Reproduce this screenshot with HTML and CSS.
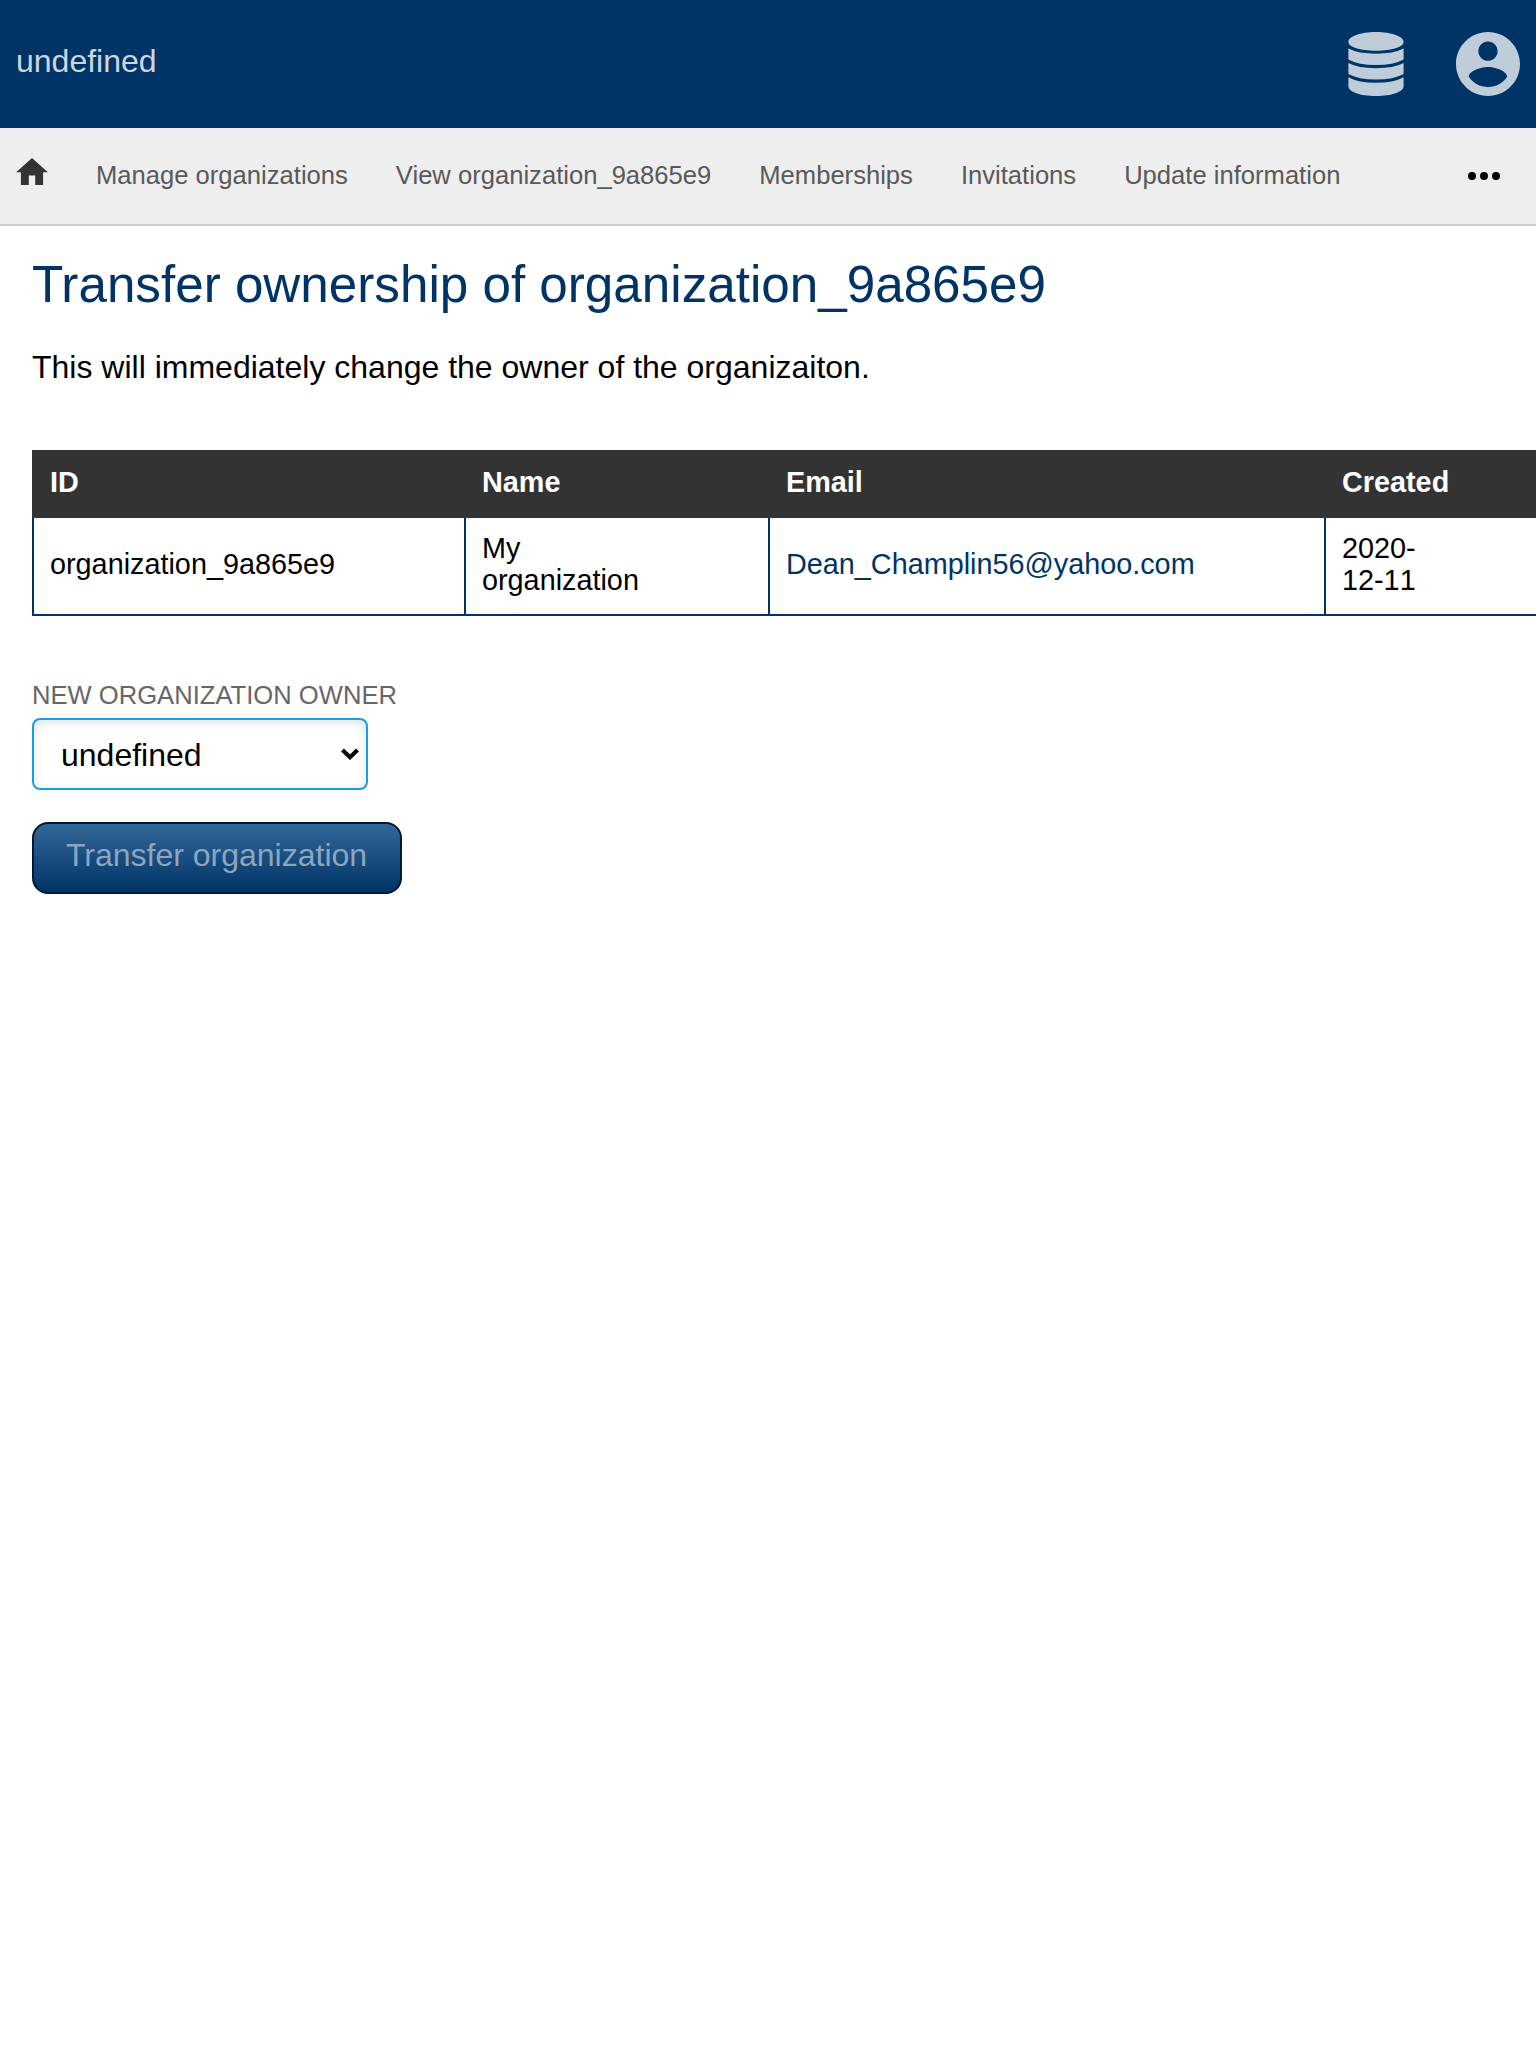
FILE: index.html
```html
<!DOCTYPE html>
<html lang="en">
<head>
<meta charset="utf-8">
<title>Transfer ownership</title>
<link rel="stylesheet" href="styles.css">
</head>
<body>
<header class="header">
  <a class="brand">undefined</a>
  <div class="menus">
    <svg class="icon-database" viewBox="-0.400 0 56.800 64" preserveAspectRatio="none"><path d="M28 0C44 0 56 4.500 56 10C56 15 44 18.700 28 18.700S0 15 0 10C0 4.500 12 0 28 0zM0 16.500Q10 21.700 28 21.700T56 16.500V27.500Q46 33 28 33T0 27.500zM0 31Q10 36.200 28 36.200T56 31V42Q46 47.600 28 47.600T0 42zM0 45.200Q10 50.800 28 50.800T56 45.200V54C56 60 44 64 28 64S0 60 0 54z"/></svg>
    <svg class="icon-account" viewBox="2 2 20 20"><path d="M12 2C6.480 2 2 6.480 2 12s4.480 10 10 10 10-4.480 10-10S17.520 2 12 2zm0 3c1.660 0 3 1.340 3 3s-1.340 3-3 3-3-1.340-3-3 1.340-3 3-3zm0 14.200c-2.500 0-4.710-1.280-6-3.220.03-1.990 4-3.080 6-3.080 1.990 0 5.970 1.090 6 3.080-1.290 1.940-3.500 3.220-6 3.220z"/></svg>
  </div>
</header>
<nav class="nav">
  <svg class="icon-home" viewBox="2 3 20 17"><path d="M10 20v-6h4v6h5v-8h3L12 3 2 12h3v8z"/></svg>
  <a>Manage organizations</a>
  <a>View organization_9a865e9</a>
  <a>Memberships</a>
  <a>Invitations</a>
  <a>Update information</a>
  <svg class="icon-more" viewBox="0 0 32 8"><circle cx="4" cy="4" r="4"/><circle cx="16" cy="4" r="4"/><circle cx="28" cy="4" r="4"/></svg>
</nav>
<main class="content">
  <h1>Transfer ownership of organization_9a865e9</h1>
  <p>This will immediately change the owner of the organizaiton.</p>
  <table class="data">
    <colgroup><col class="col-id"><col class="col-name"><col class="col-email"><col class="col-created"></colgroup>
    <thead><tr><th>ID</th><th>Name</th><th>Email</th><th>Created</th></tr></thead>
    <tbody><tr><td>organization_9a865e9</td><td>My<br>organization</td><td><a>Dean_Champlin56@yahoo.com</a></td><td class="date">2020-<br>12-11</td></tr></tbody>
  </table>
  <form class="form">
    <label for="owner">New organization owner</label>
    <div class="select">
      <select id="owner"><option>undefined</option></select>
      <svg class="chevron" viewBox="0 0 18 12"><path d="M1.500 2L9 9.300L16.500 2"/></svg>
    </div>
    <button type="button">Transfer organization</button>
  </form>
</main>
</body>
</html>
```
FILE: styles.css
```css
* { box-sizing: border-box; }
html { overflow: hidden; }
body {
  margin: 0;
  background: #fff;
  color: #000;
  font: 32px "Liberation Sans", Arial, sans-serif;
}
svg { display: block; flex: none; }
.header {
  display: flex;
  justify-content: space-between;
  align-items: center;
  height: 128px;
  padding: 0 16px;
  background: #036;
}
.brand { color: #ccd6e0; line-height: 36px; padding-bottom: 6px; }
.menus { display: flex; gap: 52px; fill: #bfccd9; }
.icon-database { width: 56px; height: 64px; }
.icon-account { width: 64px; height: 64px; }
.nav {
  display: flex;
  align-items: center;
  gap: 48px;
  height: 98px;
  padding: 0 36px 0 16px;
  background: #eee;
  border-bottom: 2px solid #ccc;
  color: #595959;
  font-size: 25.6px;
  white-space: nowrap;
}
.nav a { padding-bottom: 2px; }
.icon-home { width: 32px; height: 27px; margin-bottom: 9px; fill: #333; }
.icon-more { width: 32px; height: 8px; margin-left: auto; }
.content { padding: 28px 0 28px 32px; overflow: hidden; }
h1 {
  margin: 0;
  color: #036;
  font-size: 51.2px;
  font-weight: 400;
  line-height: 62px;
}
p { margin: 32px 0 64px; line-height: 38px; }
.data {
  width: 1504px;
  table-layout: fixed;
  border-collapse: separate;
  border-spacing: 0;
  border-left: 2px solid #036;
  font-size: 28.8px;
  line-height: 32px;
}
.col-id { width: 432px; }
.col-name { width: 304px; }
.col-email { width: 556px; }
th {
  height: 68px;
  padding: 16px 16px 20px;
  background: #333;
  color: #fff;
  text-align: left;
}
th:first-child { box-shadow: -2px 0 #333; }
td {
  height: 98px;
  padding: 14px 16px 18px;
  border-right: 2px solid #036;
  border-bottom: 2px solid #036;
}
td:last-child { border-right: 0; }
td a { color: #036; }
.date { font-kerning: none; }
.form { display: flex; flex-direction: column; align-items: flex-start; margin-top: 64px; }
label { color: #666; font-size: 25.6px; line-height: 30px; margin-bottom: 8px; text-transform: uppercase; }
.select { display: grid; width: 336px; height: 72px; }
.select > * { grid-area: 1 / 1; }
select {
  appearance: none;
  padding: 2px 27px 0;
  border: 2px solid #14a0e6;
  border-radius: 8px;
  background: #fff;
  box-shadow: inset 0 2px 8px rgba(0, 0, 0, .13);
  color: #000;
  font: inherit;
}
.chevron {
  width: 18px;
  height: 12px;
  place-self: center end;
  margin-right: 9px;
  pointer-events: none;
  fill: none;
  stroke: #000;
  stroke-width: 4;
}
button {
  width: 370px;
  height: 72px;
  margin-top: 32px;
  padding: 0 1px 6px 0;
  border: 2px solid #001a33;
  border-radius: 16px;
  background: linear-gradient(#369, #036);
  color: #8ca6c0;
  font: inherit;
}
```
